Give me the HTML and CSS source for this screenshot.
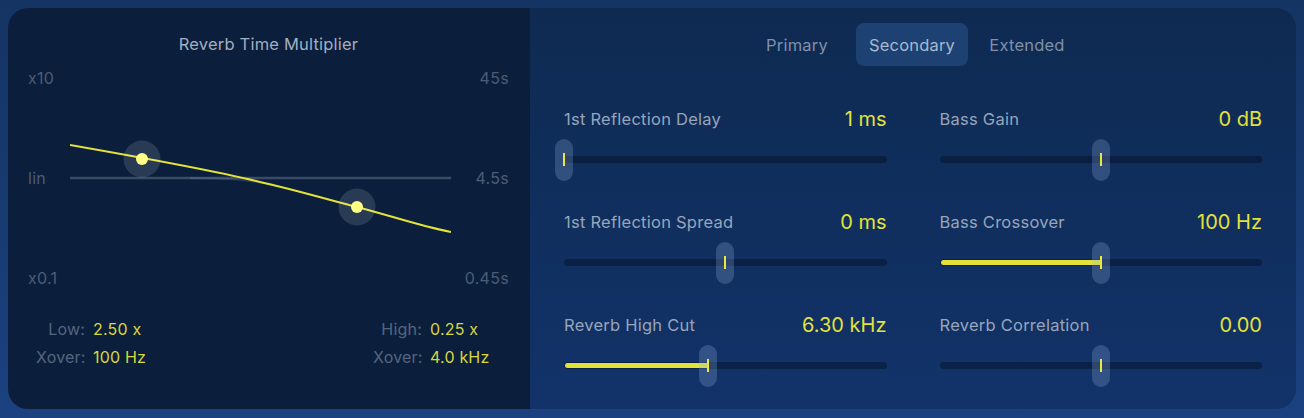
FILE: index.html
```html
<!DOCTYPE html>
<html lang="en">
<head>
  <meta charset="UTF-8">
  <title>Reverb Time Multiplier</title>
  <link rel="stylesheet" href="styles.css">
</head>
<body>

  <div class="unit">

    <!-- multiplier curve -->
    <section class="curve-pane">
      <h2 class="pane-title">Reverb Time Multiplier</h2>

      <div class="chart">
        <div class="axis axis-mult">
          <span>x10</span>
          <span>lin</span>
          <span>x0.1</span>
        </div>

        <svg class="curve" width="381" height="220" viewBox="0 0 381 220">
          <line class="lin-line" x1="0" y1="110" x2="381" y2="110"/>
          <path class="ghost-line" d="M120,110 C160,110 178,112 204,117"/>
          <path class="mult-line" d="M0,77 C40,84 150,104 190,114 C230,123 255,131 287,139 C325,149 350,158 381,164"/>
          <circle class="halo" cx="72" cy="91" r="18.5"/>
          <circle class="dot" cx="72" cy="91" r="6"/>
          <circle class="halo" cx="287" cy="139" r="18.5"/>
          <circle class="dot" cx="287" cy="139" r="6"/>
        </svg>

        <div class="axis axis-time">
          <span>45s</span>
          <span>4.5s</span>
          <span>0.45s</span>
        </div>
      </div>

      <div class="readouts">
        <dl class="readout">
          <dt>Low:</dt><dd>2.50 x</dd>
          <dt>Xover:</dt><dd>100 Hz</dd>
        </dl>
        <dl class="readout">
          <dt>High:</dt><dd>0.25 x</dd>
          <dt>Xover:</dt><dd>4.0 kHz</dd>
        </dl>
      </div>
    </section>

    <!-- parameter sliders -->
    <section class="params-pane">
      <nav class="tabs">
        <button class="tab">Primary</button>
        <button class="tab active">Secondary</button>
        <button class="tab">Extended</button>
      </nav>

      <div class="params">
        <div class="param">
          <div class="param-head">
            <span class="param-name">1st Reflection Delay</span>
            <span class="param-value">1 ms</span>
          </div>
          <div class="slider">
            <div class="track">
              <div class="thumb" style="left: 0%"></div>
            </div>
          </div>
        </div>

        <div class="param">
          <div class="param-head">
            <span class="param-name">Bass Gain</span>
            <span class="param-value">0 dB</span>
          </div>
          <div class="slider">
            <div class="track">
              <div class="thumb" style="left: 50%"></div>
            </div>
          </div>
        </div>

        <div class="param">
          <div class="param-head">
            <span class="param-name">1st Reflection Spread</span>
            <span class="param-value">0 ms</span>
          </div>
          <div class="slider">
            <div class="track">
              <div class="thumb" style="left: 50%"></div>
            </div>
          </div>
        </div>

        <div class="param">
          <div class="param-head">
            <span class="param-name">Bass Crossover</span>
            <span class="param-value">100 Hz</span>
          </div>
          <div class="slider">
            <div class="track">
              <div class="fill" style="width: 50%"></div>
              <div class="thumb" style="left: 50%"></div>
            </div>
          </div>
        </div>

        <div class="param">
          <div class="param-head">
            <span class="param-name">Reverb High Cut</span>
            <span class="param-value">6.30 kHz</span>
          </div>
          <div class="slider">
            <div class="track">
              <div class="fill" style="width: 44.6%"></div>
              <div class="thumb" style="left: 44.6%"></div>
            </div>
          </div>
        </div>

        <div class="param">
          <div class="param-head">
            <span class="param-name">Reverb Correlation</span>
            <span class="param-value">0.00</span>
          </div>
          <div class="slider">
            <div class="track">
              <div class="thumb" style="left: 50%"></div>
            </div>
          </div>
        </div>
      </div>
    </section>

  </div>

</body>
</html>
```

FILE: styles.css
```css
* {
  margin: 0;
  padding: 0;
  box-sizing: border-box;
}

body {
  height: 100vh;
  padding: 8px;
  overflow: hidden;
  background: linear-gradient(180deg, #143463 0%, #1b4180 100%);
  font-family: Inter, "Liberation Sans", sans-serif;
}

.unit {
  display: flex;
  width: 1288px;
  height: 401px;
  border-radius: 20px;
  overflow: hidden;
}

/* ---------- left: curve ---------- */

.curve-pane {
  width: 522px;
  padding: 26px 21px 0 20px;
  background: #0b1f3d;
}

.pane-title {
  font-size: 16.5px;
  font-weight: 400;
  line-height: 20px;
  letter-spacing: 0.2px;
  text-align: center;
  color: #a3aec0;
}

.chart {
  display: grid;
  grid-template-columns: 42px 381px 58px;
  height: 220px;
  margin-top: 14px;
}

.axis {
  display: flex;
  flex-direction: column;
  justify-content: space-between;
  font-size: 16px;
  line-height: 20px;
  letter-spacing: 0.3px;
  color: #4d5c76;
}

.axis-time {
  text-align: right;
}

.curve {
  display: block;
}

.lin-line {
  stroke: #3a4b66;
  stroke-width: 2.5;
}

.ghost-line {
  fill: none;
  stroke: rgba(120, 140, 170, 0.25);
  stroke-width: 2;
}

.mult-line {
  fill: none;
  stroke: #e2e23a;
  stroke-width: 2;
}

.halo {
  fill: rgba(255, 255, 255, 0.12);
}

.dot {
  fill: #ffff88;
}

.readouts {
  display: grid;
  grid-template-columns: 337px auto;
  margin-top: 27px;
  padding-left: 8px;
}

.readout {
  display: grid;
  grid-template-columns: 49px auto;
  column-gap: 8px;
  font-size: 16px;
  line-height: 28px;
  letter-spacing: 0.2px;
}

.readout dt {
  text-align: right;
  color: #56657e;
}

.readout dd {
  color: #d8d83a;
}

/* ---------- right: sliders ---------- */

.params-pane {
  flex: 1;
  padding: 15px 34px 0;
  background: linear-gradient(180deg, #0e2a51 0%, #12336a 100%);
}

.tabs {
  display: flex;
  justify-content: center;
  gap: 3px;
  margin-left: -2px;
}

.tab {
  width: 112px;
  height: 43px;
  border: none;
  border-radius: 8px;
  background: none;
  font-family: inherit;
  font-size: 16.5px;
  letter-spacing: 0.2px;
  color: #7f90aa;
}

.tab.active {
  background: #1c4172;
  color: #a8b8ce;
}

.params {
  display: grid;
  grid-template-columns: 1fr 1fr;
  column-gap: 53px;
  row-gap: 29.5px;
  margin-top: 41px;
}

.param-head {
  display: flex;
  justify-content: space-between;
  align-items: center;
  height: 24px;
}

.param-name {
  font-size: 16.5px;
  letter-spacing: 0.25px;
  color: #97a5bb;
}

.param-value {
  font-size: 20px;
  color: #e2e23a;
}

.slider {
  display: flex;
  align-items: center;
  height: 42px;
  margin-top: 7.5px;
}

.track {
  position: relative;
  width: 100%;
  height: 7px;
  border-radius: 4px;
  background: rgba(4, 18, 42, 0.5);
}

.fill {
  position: absolute;
  top: 1px;
  left: 1px;
  height: 5px;
  border-radius: 3px;
  background: #e2e23a;
}

.thumb {
  position: absolute;
  top: 50%;
  width: 18px;
  height: 42px;
  border-radius: 9px;
  background: rgba(150, 180, 225, 0.25);
  transform: translate(-50%, -50%);
}

.thumb::after {
  content: "";
  position: absolute;
  left: 8px;
  top: 14px;
  width: 2px;
  height: 13px;
  background: #e8e840;
}
```
